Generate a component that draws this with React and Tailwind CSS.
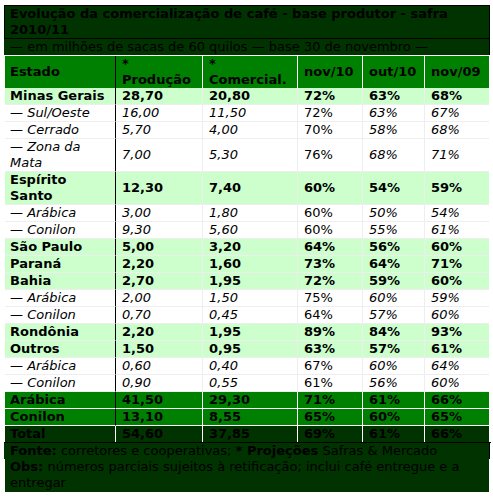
const rows = [
  { name: 'Minas Gerais', v: ['28,70', '20,80', '72%', '63%', '68%'], kind: 'main' },
  { name: '— Sul/Oeste', v: ['16,00', '11,50', '72%', '63%', '67%'], kind: 'sub' },
  { name: '— Cerrado', v: ['5,70', '4,00', '70%', '58%', '68%'], kind: 'sub' },
  { name: '— Zona da Mata', v: ['7,00', '5,30', '76%', '68%', '71%'], kind: 'sub' },
  { name: 'Espírito Santo', v: ['12,30', '7,40', '60%', '54%', '59%'], kind: 'main' },
  { name: '— Arábica', v: ['3,00', '1,80', '60%', '50%', '54%'], kind: 'sub' },
  { name: '— Conilon', v: ['9,30', '5,60', '60%', '55%', '61%'], kind: 'sub' },
  { name: 'São Paulo', v: ['5,00', '3,20', '64%', '56%', '60%'], kind: 'main' },
  { name: 'Paraná', v: ['2,20', '1,60', '73%', '64%', '71%'], kind: 'main' },
  { name: 'Bahia', v: ['2,70', '1,95', '72%', '59%', '60%'], kind: 'main' },
  { name: '— Arábica', v: ['2,00', '1,50', '75%', '60%', '59%'], kind: 'sub' },
  { name: '— Conilon', v: ['0,70', '0,45', '64%', '57%', '60%'], kind: 'sub' },
  { name: 'Rondônia', v: ['2,20', '1,95', '89%', '84%', '93%'], kind: 'main' },
  { name: 'Outros', v: ['1,50', '0,95', '63%', '57%', '61%'], kind: 'main' },
  { name: '— Arábica', v: ['0,60', '0,40', '67%', '60%', '64%'], kind: 'sub' },
  { name: '— Conilon', v: ['0,90', '0,55', '61%', '56%', '60%'], kind: 'sub' },
  { name: 'Arábica', v: ['41,50', '29,30', '71%', '61%', '66%'], kind: 'sum' },
  { name: 'Conilon', v: ['13,10', '8,55', '65%', '60%', '65%'], kind: 'sum' },
  { name: 'Total', v: ['54,60', '37,85', '69%', '61%', '66%'], kind: 'total' },
]

const rowStyle = {
  main: 'bg-[#ccffcc] font-bold border-b border-b-[#eeeeee]',
  sub: 'bg-white border-b border-b-[#eeeeee]',
  sum: 'bg-[#008000] font-bold border-b border-b-white',
  total: 'bg-[#003300] font-bold',
}

function Cell({ children, col, kind }) {
  let left = ''
  if (col === 1) left = kind === 'total' ? 'border-l border-l-white' : 'border-l border-l-black'
  else if (col > 1) left = kind === 'main' || kind === 'sub' ? 'border-l border-l-[#eeeeee]' : 'border-l border-l-white'
  const italic = kind === 'sub' && col !== 3 ? 'italic' : ''
  return (
    <div className={`flex items-center ${col === 0 ? 'pl-[5px]' : 'pl-[6px]'} pr-[4px] ${rowStyle[kind]} ${left} ${italic}`}>
      <span>{children}</span>
    </div>
  )
}

function HeadCell({ children, col }) {
  let left = ''
  if (col === 1) left = 'border-l border-l-black'
  else if (col > 1) left = 'border-l border-l-white'
  return (
    <div className={`flex h-8 items-center bg-[#008000] font-bold ${col === 0 ? 'pl-[5px]' : 'pl-[6px]'} ${left}`}>
      <span>{children}</span>
    </div>
  )
}

export default function App() {
  return (
    <div className="h-[496px] w-[493px] bg-white pl-[4px] pt-[5px] font-['DejaVu_Sans',Verdana,sans-serif] text-[13px] leading-4 text-black">
      <div className="w-[486px] border border-black bg-[#003300] pl-[5px] font-bold">
        Evolução da comercialização de café - base produtor - safra 2010/11
      </div>
      <div className="w-[486px] border-r border-black bg-[#003300] pl-[6px]">
        — em milhões de sacas de 60 quilos — base 30 de novembro —
      </div>
      <div className="ml-px mt-px grid w-[484px] grid-cols-[110px_87px_95px_65px_62px_65px]">
        <HeadCell col={0}>Estado</HeadCell>
        <HeadCell col={1}>*<br />Produção</HeadCell>
        <HeadCell col={2}>*<br />Comercial.</HeadCell>
        <HeadCell col={3}>nov/10</HeadCell>
        <HeadCell col={4}>out/10</HeadCell>
        <HeadCell col={5}>nov/09</HeadCell>
        {rows.map((r, i) => (
          <div key={i} className="contents">
            <Cell col={0} kind={r.kind}>{r.name}</Cell>
            {r.v.map((x, j) => (
              <Cell key={j} col={j + 1} kind={r.kind}>{x}</Cell>
            ))}
          </div>
        ))}
      </div>
      <div className="w-[487px] border-t border-black">
        <div className="w-[486px] border-r border-black bg-[#003300] pl-[6px]">
          <b>Fonte:</b> corretores e cooperativas; <b>* Projeções</b> Safras &amp; Mercado
        </div>
        <div className="ml-px w-[484px] bg-[#003300] pl-[5px] pb-px">
          <b>Obs:</b> números parciais sujeitos à retificação; inclui café entregue e a entregar
        </div>
      </div>
    </div>
  )
}
